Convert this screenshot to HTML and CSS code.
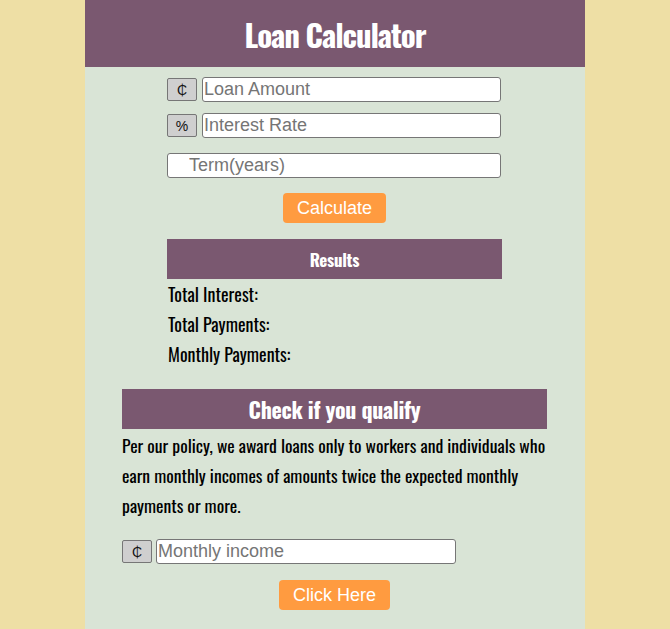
FILE: index.html
```html
<!DOCTYPE html>
<html>
<head>
<meta charset="utf-8">
<link rel="stylesheet" href="styles.css">
</head>
<body>
<div class="page">
  <header class="header"><h1 class="title">Loan Calculator</h1></header>
  <section class="calc">
    <div class="row">
      <span class="addon">₵</span>
      <input class="field" type="text" placeholder="Loan Amount">
    </div>
    <div class="row">
      <span class="addon">%</span>
      <input class="field" type="text" placeholder="Interest Rate">
    </div>
    <div class="row row-term">
      <input class="field field-term" type="text" placeholder="Term(years)">
    </div>
    <div class="btn-wrap"><button class="btn">Calculate</button></div>
    <div class="bar bar-results">Results</div>
    <ul class="results">
      <li>Total Interest:</li>
      <li>Total Payments:</li>
      <li>Monthly Payments:</li>
    </ul>
  </section>
  <section class="qualify">
    <div class="bar bar-qualify">Check if you qualify</div>
    <p class="policy">Per our policy, we award loans only to workers and individuals who earn monthly incomes of amounts twice the expected monthly payments or more.</p>
    <div class="row row-income">
      <span class="addon">₵</span>
      <input class="field field-income" type="text" placeholder="Monthly income">
    </div>
    <div class="btn-wrap"><button class="btn">Click Here</button></div>
  </section>
</div>
</body>
</html>
```
FILE: styles.css
```css
* { box-sizing: border-box; }
html, body { margin: 0; padding: 0; }
body {
  background: #eedfa5;
  font-family: "Oswald", "Roboto Condensed", sans-serif;
  color: #000;
}
.page {
  width: 500px;
  margin: 0 auto;
  background: #d9e4d6;
  min-height: 629px;
  padding-bottom: 1px;
}
.header {
  background: #7a5870;
  height: 67px;
  display: flex;
  align-items: center;
  justify-content: center;
}
.title {
  margin: 0;
  color: #fff;
  font-size: 31px;
  font-weight: 700;
  letter-spacing: -1.1px;
}
.calc {
  width: 335px;
  margin-left: 82px;
  padding-top: 10px;
}
.row {
  display: flex;
  align-items: center;
  gap: 5px;
  margin-bottom: 11px;
}
.row-term { margin-top: 15px; margin-bottom: 15px; }
.addon {
  width: 30px;
  height: 23px;
  background: #cfcfcf;
  border: 1px solid #767676;
  border-radius: 2px;
  font-family: "Liberation Sans", Arial, sans-serif;
  font-size: 14px;
  display: flex;
  align-items: center;
  justify-content: center;
  color: #111;
}
.field {
  width: 299px;
  height: 25px;
  border: 1px solid #767676;
  border-radius: 3px;
  background: #fff;
  font-family: "Liberation Sans", Arial, sans-serif;
  font-size: 18px;
  padding: 0 1px;
  margin: 0;
}
.field::placeholder { color: #757575; }
.field-term { width: 334px; padding-left: 21px; }
.btn-wrap { display: flex; justify-content: center; }
.btn {
  background: #ff9b40;
  color: #fff;
  border: none;
  border-radius: 4px;
  font-family: "Liberation Sans", Arial, sans-serif;
  font-size: 18px;
  height: 30px;
  padding: 0 14px;
  margin: 0;
}
.bar {
  background: #7a5870;
  color: #fff;
  font-weight: 700;
  display: flex;
  align-items: center;
  justify-content: center;
  height: 40px;
}
.bar-results {
  margin-top: 16px;
  font-size: 17px;
  letter-spacing: -0.3px;
  width: 335px;
}
.results {
  list-style: none;
  margin: 0;
  padding: 0 0 0 1px;
  font-size: 18px;
  line-height: 30px;
}
.qualify {
  width: 425px;
  margin-left: 37px;
  padding-top: 20px;
}
.bar-qualify { font-size: 22px; letter-spacing: -0.3px; }
.policy {
  margin: 1px 0 19px;
  font-size: 17.7px;
  line-height: 30px;
}
.row-income { gap: 4px; margin-bottom: 16px; }
.field-income { width: 300px; }
```
